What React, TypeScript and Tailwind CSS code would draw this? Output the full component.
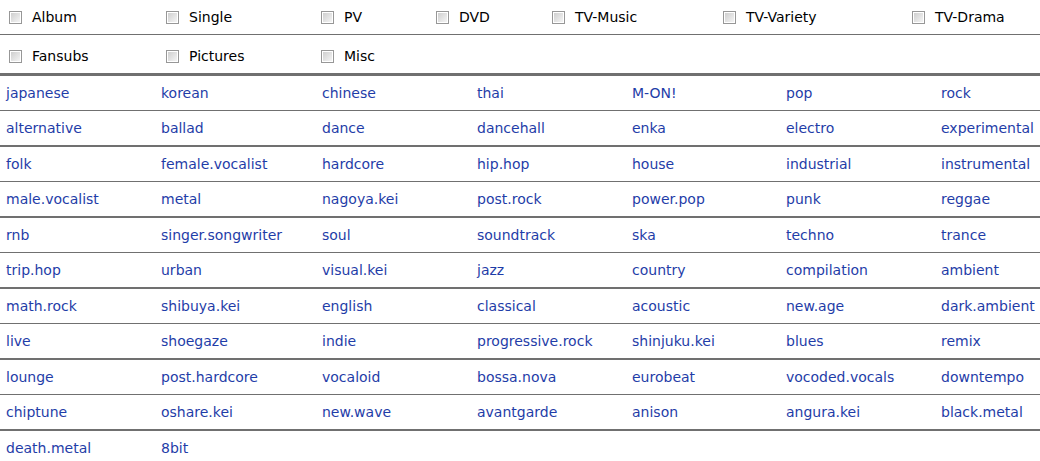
const formats = [
  ["Album", "Single", "PV", "DVD", "TV-Music", "TV-Variety", "TV-Drama"],
  ["Fansubs", "Pictures", "Misc"],
];

const genres = [
  ["japanese", "korean", "chinese", "thai", "M-ON!", "pop", "rock"],
  ["alternative", "ballad", "dance", "dancehall", "enka", "electro", "experimental"],
  ["folk", "female.vocalist", "hardcore", "hip.hop", "house", "industrial", "instrumental"],
  ["male.vocalist", "metal", "nagoya.kei", "post.rock", "power.pop", "punk", "reggae"],
  ["rnb", "singer.songwriter", "soul", "soundtrack", "ska", "techno", "trance"],
  ["trip.hop", "urban", "visual.kei", "jazz", "country", "compilation", "ambient"],
  ["math.rock", "shibuya.kei", "english", "classical", "acoustic", "new.age", "dark.ambient"],
  ["live", "shoegaze", "indie", "progressive.rock", "shinjuku.kei", "blues", "remix"],
  ["lounge", "post.hardcore", "vocaloid", "bossa.nova", "eurobeat", "vocoded.vocals", "downtempo"],
  ["chiptune", "oshare.kei", "new.wave", "avantgarde", "anison", "angura.kei", "black.metal"],
  ["death.metal", "8bit"],
];

const Checkbox = () => (
  <span className="inline-block w-[13px] h-[13px] border border-[#979797] bg-white p-px shrink-0">
    <span className="block w-full h-full bg-gradient-to-br from-[#cfcfcf] to-[#f4f4f4]" />
  </span>
);

const FormatRow: React.FC<{ items: string[]; last?: boolean }> = ({ items, last }) => (
  <div
    className={
      last
        ? "grid grid-cols-[157px_155px_115px_116px_171px_189px_1fr] h-[41px] pt-[5px] items-center border-b-[3px] border-[#707070]"
        : "grid grid-cols-[157px_155px_115px_116px_171px_189px_1fr] h-[35px] items-center border-b border-[#707070]"
    }
  >
    {items.map((item) => (
      <label key={item} className="flex items-center pl-[9px] text-black">
        <Checkbox />
        <span className="ml-[10px]">{item}</span>
      </label>
    ))}
  </div>
);

export default function App() {
  return (
    <div className="w-[1040px] h-[461px] overflow-hidden bg-white text-[14px] font-['DejaVu_Sans',sans-serif]">
      <FormatRow items={formats[0]} />
      <FormatRow items={formats[1]} last />
      {genres.map((row, i) => (
        <div
          key={i}
          className={
            i === genres.length - 1
              ? "grid grid-cols-[155px_161px_155px_155px_154px_155px_1fr] h-[34px] items-center"
              : i % 2 === 0
              ? "grid grid-cols-[155px_161px_155px_155px_154px_155px_1fr] h-[35px] items-center border-b border-[#707070]"
              : "grid grid-cols-[155px_161px_155px_155px_154px_155px_1fr] h-[36px] pt-px items-center border-b-2 border-[#707070]"
          }
        >
          {row.map((g) => (
            <a key={g} href="#" className="pl-[6px] text-[#1f3da8] whitespace-nowrap">
              {g}
            </a>
          ))}
        </div>
      ))}
    </div>
  );
}
